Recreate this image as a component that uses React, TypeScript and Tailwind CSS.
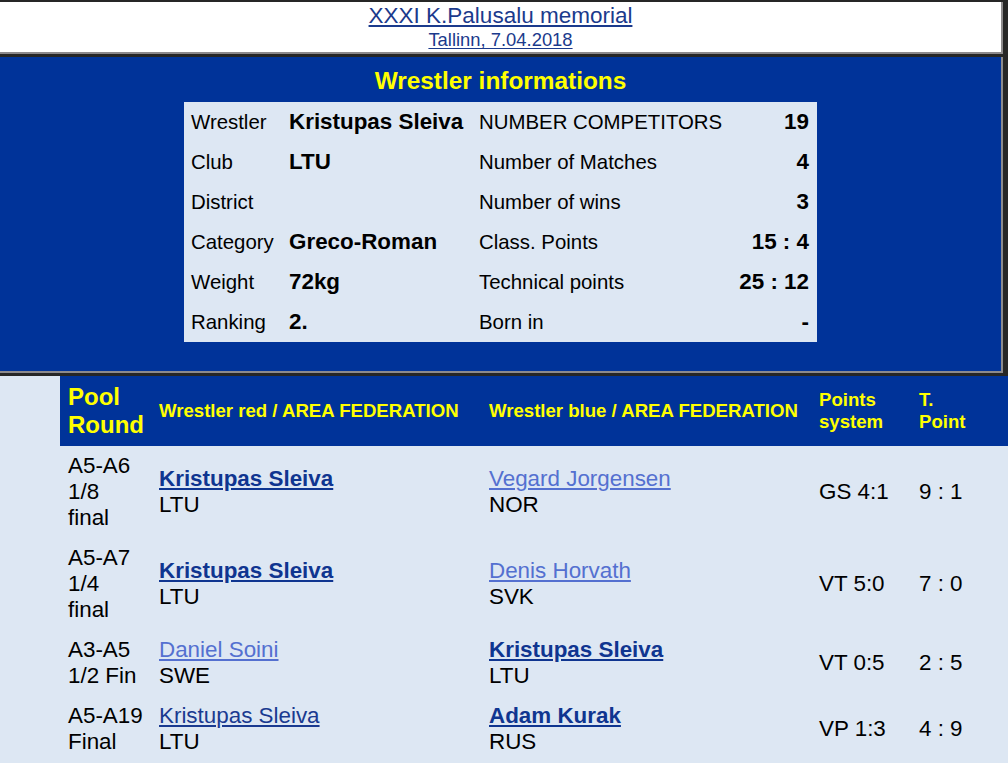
import React from "react";

const font = { fontFamily: '"Liberation Sans", Arial, sans-serif' };

type Match = {
  pool: string[];
  red: { name: string; fed: string; kind: "self" | "other" | "selfplain" };
  blue: { name: string; fed: string; kind: "self" | "other" | "selfplain" };
  sys: string;
  tp: string;
};

const matches: Match[] = [
  {
    pool: ["A5-A6", "1/8", "final"],
    red: { name: "Kristupas Sleiva", fed: "LTU", kind: "self" },
    blue: { name: "Vegard Jorgensen", fed: "NOR", kind: "other" },
    sys: "GS 4:1",
    tp: "9 : 1",
  },
  {
    pool: ["A5-A7", "1/4", "final"],
    red: { name: "Kristupas Sleiva", fed: "LTU", kind: "self" },
    blue: { name: "Denis Horvath", fed: "SVK", kind: "other" },
    sys: "VT 5:0",
    tp: "7 : 0",
  },
  {
    pool: ["A3-A5", "1/2 Fin"],
    red: { name: "Daniel Soini", fed: "SWE", kind: "other" },
    blue: { name: "Kristupas Sleiva", fed: "LTU", kind: "self" },
    sys: "VT 0:5",
    tp: "2 : 5",
  },
  {
    pool: ["A5-A19", "Final"],
    red: { name: "Kristupas Sleiva", fed: "LTU", kind: "selfplain" },
    blue: { name: "Adam Kurak", fed: "RUS", kind: "self" },
    sys: "VP 1:3",
    tp: "4 : 9",
  },
];

function Name({ name, kind }: { name: string; kind: string }) {
  if (kind === "self")
    return <a href="#" className="font-bold text-[#0f3590] underline underline-offset-2">{name}</a>;
  if (kind === "selfplain")
    return <a href="#" className="text-[#1a3a90] underline underline-offset-2">{name}</a>;
  return <a href="#" className="text-[#5470d0] underline underline-offset-2">{name}</a>;
}

const info: [string, string, string, string][] = [
  ["Wrestler", "Kristupas Sleiva", "NUMBER COMPETITORS", "19"],
  ["Club", "LTU", "Number of Matches", "4"],
  ["District", "", "Number of wins", "3"],
  ["Category", "Greco-Roman", "Class. Points", "15 : 4"],
  ["Weight", "72kg", "Technical points", "25 : 12"],
  ["Ranking", "2.", "Born in", "-"],
];

export default function App() {
  return (
    <div style={font} className="w-[1008px] h-[763px] overflow-hidden bg-[#262626] flex flex-col">
      {/* top frame */}
      <div className="mt-[2px] w-[1003px] h-[52px] bg-white border-r-2 border-b-2 border-[#8c8a8c] flex flex-col items-center">
        <a href="#" className="text-[22.5px] leading-[24px] mt-[2px] text-[#1b3a8c] underline underline-offset-2">
          XXXI K.Palusalu memorial
        </a>
        <a href="#" className="text-[18.4px] leading-[20px] mt-[2px] text-[#1b3a8c] underline underline-offset-2">
          Tallinn, 7.04.2018
        </a>
      </div>
      {/* info frame */}
      <div className="mt-[3px] w-[1003px] h-[316px] bg-[#003399] border-r-2 border-b-2 border-[#8c8a8c] flex flex-col items-center">
        <div className="pt-[10px] text-[24.4px] leading-[28px] font-bold text-[#ffff00]">Wrestler informations</div>
        <div className="mt-[7px] w-[633px] bg-[#dde7f3] text-black">
          {info.map((r, i) => (
            <div key={i} className="grid grid-cols-[98px_190px_250px_95px] h-[40px] items-center whitespace-nowrap">
              <div className="pl-[7px] text-[20.4px]">{r[0]}</div>
              <div className="pl-[7px] text-[22.4px] font-bold">{r[1]}</div>
              <div className="pl-[7px] text-[20.4px]">{r[2]}</div>
              <div className="pr-[8px] text-right text-[22.4px] font-bold">{r[3]}</div>
            </div>
          ))}
        </div>
      </div>
      {/* matches frame */}
      <div className="mt-[3px] flex-1 bg-[#dde7f3] pl-[60px]">
        <div className="grid grid-cols-[92px_330px_330px_100px_1fr] h-[70px] items-center bg-[#003399] text-[#ffff00] font-bold">
          <div className="pl-[8px] text-[24px] leading-[28px]">
            Pool
            <br />
            Round
          </div>
          <div className="pl-[7px] text-[18.6px] leading-[22px]">Wrestler red / AREA FEDERATION</div>
          <div className="pl-[7px] text-[18.6px] leading-[22px]">Wrestler blue / AREA FEDERATION</div>
          <div className="pl-[7px] text-[18.6px] leading-[22px]">
            Points
            <br />
            system
          </div>
          <div className="pl-[7px] text-[18.6px] leading-[22px]">
            T.
            <br />
            Point
          </div>
        </div>
        {matches.map((m, i) => (
          <div
            key={i}
            className="grid grid-cols-[92px_330px_330px_100px_1fr] py-[7px] items-center text-[22.4px] leading-[26px] text-black"
          >
            <div className="pl-[8px]">
              {m.pool.map((p, j) => (
                <div key={j}>{p}</div>
              ))}
            </div>
            <div className="pl-[7px]">
              <div>
                <Name name={m.red.name} kind={m.red.kind} />
              </div>
              <div>{m.red.fed}</div>
            </div>
            <div className="pl-[7px]">
              <div>
                <Name name={m.blue.name} kind={m.blue.kind} />
              </div>
              <div>{m.blue.fed}</div>
            </div>
            <div className="pl-[7px]">{m.sys}</div>
            <div className="pl-[7px]">{m.tp}</div>
          </div>
        ))}
      </div>
    </div>
  );
}
